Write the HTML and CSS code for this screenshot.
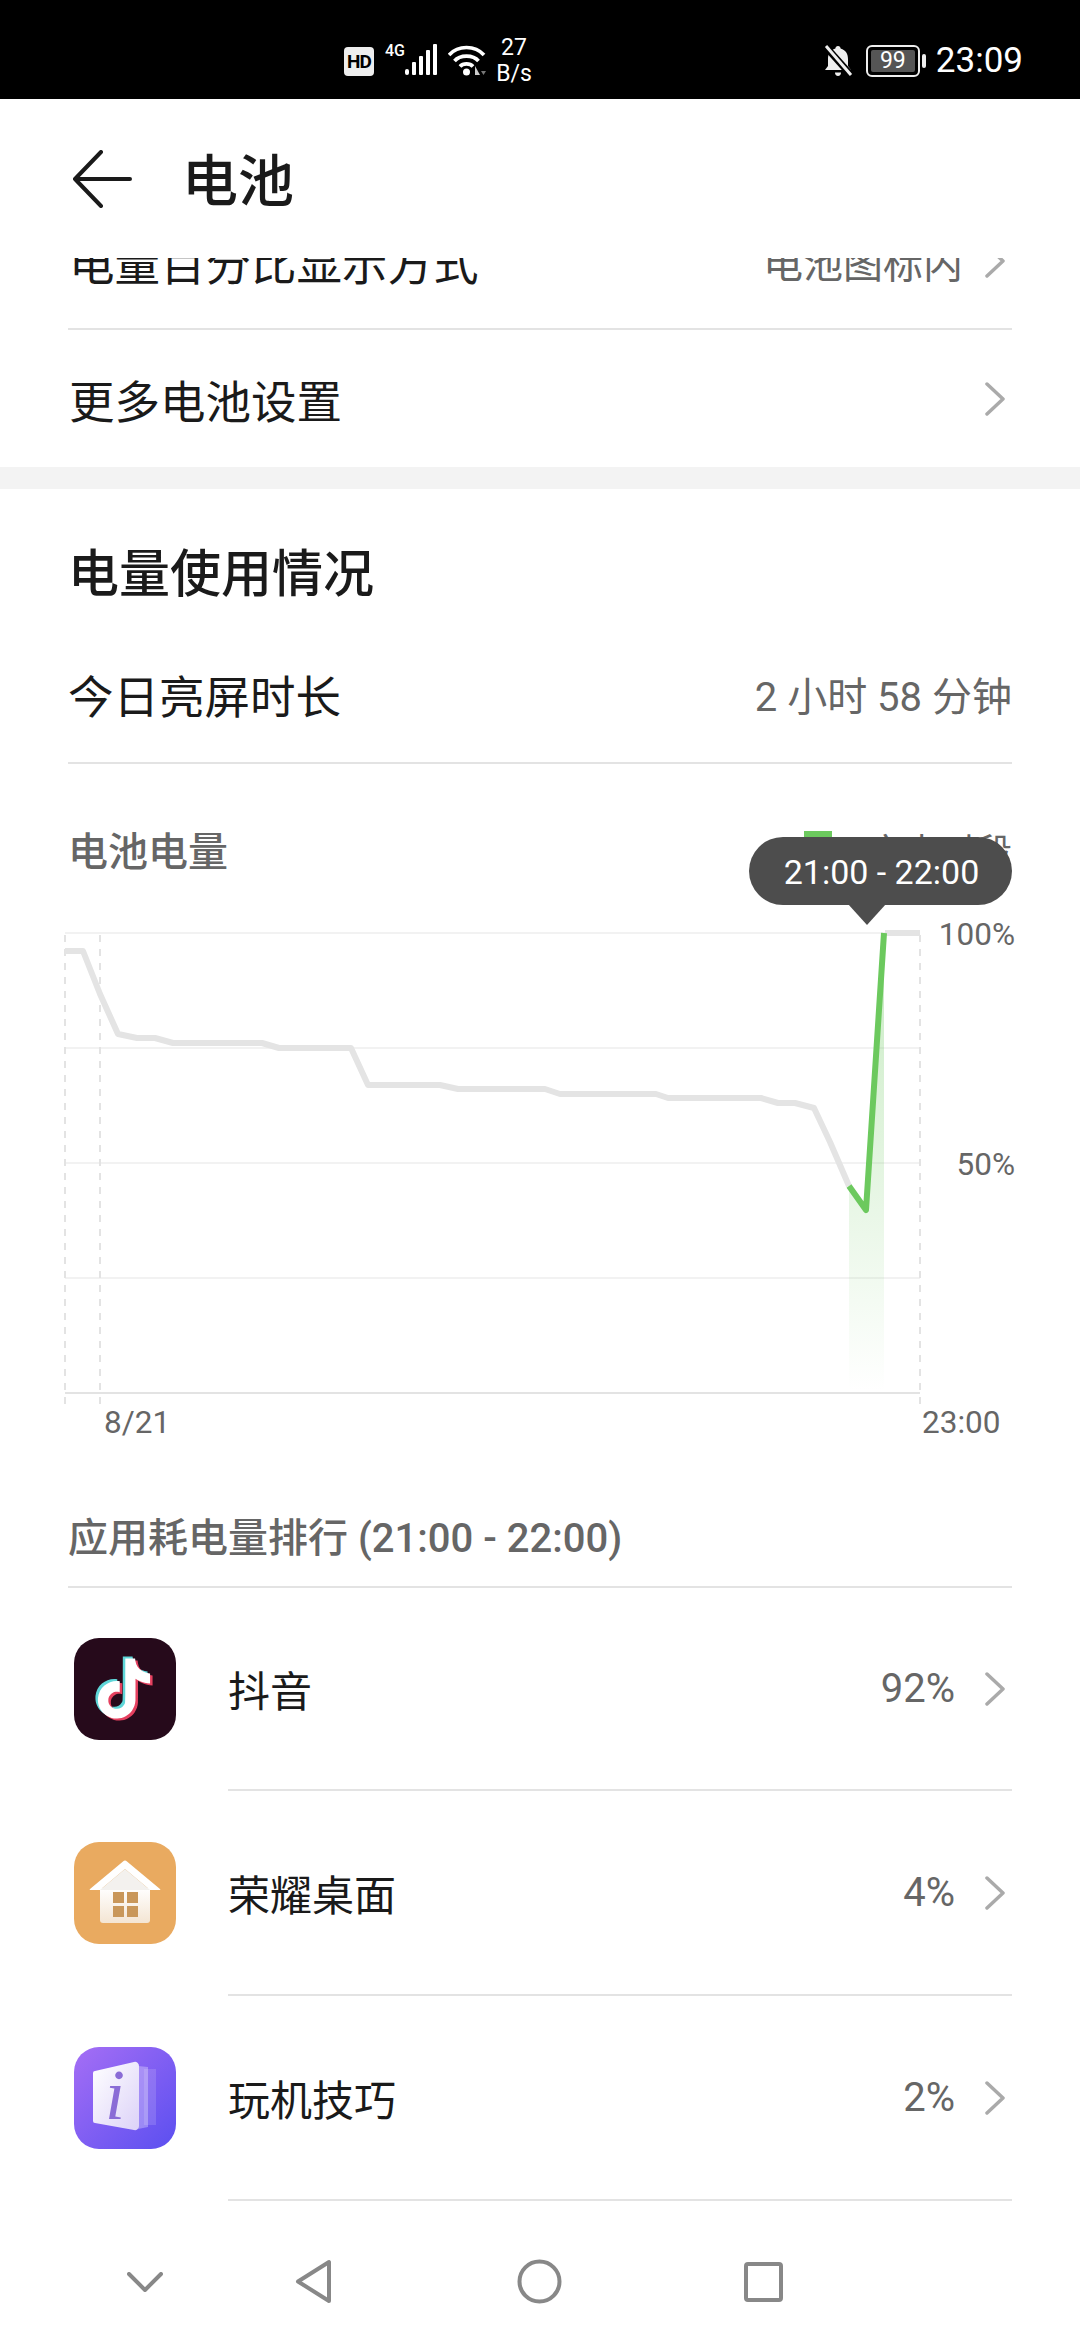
FILE: index.html
```html
<!DOCTYPE html>
<html lang="zh-CN">
<head>
    <meta charset="UTF-8">
    <title>电池</title>
    <link rel="stylesheet" href="styles.css">
</head>
<body>
    <!-- Status bar -->
    <div class="status-bar">
        <span class="hd-badge">HD</span>
        <span class="net-type">4G</span>
        <svg class="signal" viewBox="0 0 33 32">
            <rect x="0" y="25" width="4" height="6" rx="2"/>
            <rect x="7" y="18" width="4" height="13" rx="1"/>
            <rect x="14" y="12" width="4" height="19" rx="1"/>
            <rect x="21" y="6" width="4" height="25" rx="1"/>
            <rect x="28" y="0" width="4" height="31" rx="1"/>
        </svg>
        <svg class="wifi" viewBox="0 0 38 32">
            <path d="M1 11C10 1 27 1 36 11M6.500 17C12 10.500 25 10.500 30.500 17M12 22.500C15 19 22 19 25 22.500" fill="none" stroke="#fff" stroke-width="3.600"/>
            <circle cx="18.500" cy="28" r="3.500" fill="#fff"/>
            <path d="M27 31V22L32 31z" fill="#ccc"/>
            <path d="M33 27h5l-2.500 4z" fill="#777"/>
        </svg>
        <div class="speed">
            <span>27</span>
            <span>B/s</span>
        </div>
        <div class="status-right">
            <svg class="bell" viewBox="0 0 32 32">
                <path d="M16 1c1.600 0 2.500 1 2.600 2.400C24 5 26 9 26 14v7l3 4H3l3-4v-7C6 9 8 5 13.400 3.400 13.500 2 14.400 1 16 1z" fill="#eee"/>
                <path d="M13 27.500h6c0 2-1.200 3.500-3 3.500s-3-1.500-3-3.500z" fill="#eee"/>
                <path d="M3 1l26 29" stroke="#000" stroke-width="7"/>
                <path d="M4 1l25 29" stroke="#eee" stroke-width="3"/>
            </svg>
            <div class="battery"><span class="battery-level">99</span></div>
            <span class="battery-nub"></span>
            <span class="clock">23:09</span>
        </div>
    </div>

    <!-- Title bar -->
    <header class="title-bar">
        <svg class="back-arrow" viewBox="0 0 60 58">
            <path d="M29 2L3 29L29 56M3 29H58" fill="none" stroke="#1a1a1a" stroke-width="4" stroke-linecap="round" stroke-linejoin="round"/>
        </svg>
        <h1>电池</h1>
    </header>

    <main class="scroll-area">
        <div class="settings">
            <div class="setting-row">
                <span>电量百分比显示方式</span>
                <span class="setting-value">电池图标内</span>
                <svg class="chevron" viewBox="0 0 20 34"><path d="M2 2L18 17L2 32"/></svg>
            </div>
            <div class="setting-row">
                <span>更多电池设置</span>
                <svg class="chevron" viewBox="0 0 20 34"><path d="M2 2L18 17L2 32"/></svg>
            </div>
        </div>

        <section class="usage">
            <h2>电量使用情况</h2>
            <div class="screen-time">
                <span>今日亮屏时长</span>
                <span class="setting-value">2 小时 58 分钟</span>
            </div>

            <div class="chart-block">
                <div class="chart-head">
                    <span>电池电量</span>
                    <div class="legend">
                        <span class="legend-swatch"></span>
                        <span>充电时段</span>
                    </div>
                </div>
                <div class="tooltip">21:00 - 22:00</div>

                <svg class="chart" viewBox="0 920 1080 530">
                    <defs>
                        <linearGradient id="chargeFill" gradientUnits="userSpaceOnUse" x1="0" y1="934" x2="0" y2="1392">
                            <stop offset="0" stop-color="#6cc95e" stop-opacity="0.38"/>
                            <stop offset="1" stop-color="#6cc95e" stop-opacity="0"/>
                        </linearGradient>
                    </defs>
                    <path class="grid" d="M65 934H920M65 1049H920M65 1164H920M65 1279H920"/>
                    <path class="axis" d="M65 1394H920"/>
                    <path class="dash" d="M65 936V1405M100 936V1405M920 936V1405"/>
                    <path d="M849 1187L866 1211L884 934V1392H849z" fill="url(#chargeFill)"/>
                    <path class="line-used" d="M65 952H83L100 995L118 1035L137 1039H155L173 1044H262L279 1049H351L368 1086H440L458 1090H545L560 1095H656L668 1099H761L778 1104H795L814 1109L830 1143L849 1187"/>
                    <path class="line-used" d="M885 934H920"/>
                    <path class="line-charge" d="M849 1187L866 1211L884 934"/>
                    <text class="axis-label" x="1015" y="946" text-anchor="end">100%</text>
                    <text class="axis-label" x="1015" y="1176" text-anchor="end">50%</text>
                    <text class="axis-label" x="104" y="1434">8/21</text>
                    <text class="axis-label" x="922" y="1434">23:00</text>
                </svg>
            </div>

            <div class="rank-title">应用耗电量排行 (21:00 - 22:00)</div>

            <div class="app-row">
                <svg class="app-icon" viewBox="0 0 102 102">
                    <defs>
                        <path id="note" d="M12.525.02c1.310-.020 2.610-.010 3.910-.020.080 1.530.630 3.090 1.750 4.170 1.120 1.110 2.700 1.620 4.240 1.790v4.030c-1.440-.050-2.890-.350-4.200-.970-.570-.260-1.100-.590-1.620-.930-.010 2.920.010 5.840-.020 8.750-.080 1.400-.540 2.790-1.350 3.940-1.310 1.920-3.580 3.170-5.910 3.210-1.430.080-2.860-.310-4.080-1.030-2.020-1.190-3.440-3.370-3.650-5.710-.020-.500-.030-1-.010-1.490.180-1.900 1.120-3.720 2.580-4.960 1.660-1.440 3.980-2.130 6.150-1.720.020 1.480-.040 2.960-.040 4.440-.990-.320-2.150-.230-3.020.370-.630.410-1.110 1.040-1.360 1.750-.210.510-.150 1.070-.140 1.610.240 1.640 1.820 3.020 3.500 2.870 1.120-.010 2.190-.660 2.770-1.610.190-.330.400-.670.410-1.060.100-1.790.060-3.570.070-5.360.010-4.030-.010-8.050.020-12.070z"/>
                    </defs>
                    <rect width="102" height="102" rx="25" fill="#260a1b"/>
                    <use href="#note" transform="translate(17.500 18.500) scale(2.500)" fill="#5fd6d8"/>
                    <use href="#note" transform="translate(22.500 22.500) scale(2.500)" fill="#e5405f"/>
                    <use href="#note" transform="translate(20 20.500) scale(2.500)" fill="#fff"/>
                </svg>
                <div class="app-body">
                    <span class="app-name">抖音</span>
                    <span class="app-percent">92%</span>
                    <svg class="chevron" viewBox="0 0 20 34"><path d="M2 2L18 17L2 32"/></svg>
                </div>
            </div>

            <div class="app-row">
                <svg class="app-icon" viewBox="0 0 102 102">
                    <defs>
                        <linearGradient id="homeWall" x1="0" y1="0" x2="0" y2="1">
                            <stop offset="0" stop-color="#fff"/>
                            <stop offset="1" stop-color="#f4e5d3"/>
                        </linearGradient>
                    </defs>
                    <rect width="102" height="102" rx="25" fill="#e9aa60"/>
                    <path d="M26 46H76V78a3 3 0 0 1-3 3H29a3 3 0 0 1-3-3z" fill="url(#homeWall)"/>
                    <path d="M49 19.500a3 3 0 0 1 4 0L86 47a.500.500 0 0 1-.500 1H76L51 27L26 48H16.500a.500.500 0 0 1-.500-1z" fill="#fff"/>
                    <path d="M26 48L51 27L76 48z" fill="#f3f1ee"/>
                    <g fill="#c9975a">
                        <rect x="39" y="50" width="11" height="11"/>
                        <rect x="53" y="50" width="11" height="11"/>
                        <rect x="39" y="64" width="11" height="11"/>
                        <rect x="53" y="64" width="11" height="11"/>
                    </g>
                </svg>
                <div class="app-body">
                    <span class="app-name">荣耀桌面</span>
                    <span class="app-percent">4%</span>
                    <svg class="chevron" viewBox="0 0 20 34"><path d="M2 2L18 17L2 32"/></svg>
                </div>
            </div>

            <div class="app-row">
                <svg class="app-icon" viewBox="0 0 102 102">
                    <defs>
                        <linearGradient id="tipsBg" x1="0" y1="0" x2="1" y2="1">
                            <stop offset="0" stop-color="#a56ef5"/>
                            <stop offset="1" stop-color="#5b4ff0"/>
                        </linearGradient>
                        <linearGradient id="tipsPage" x1="0" y1="0" x2="1" y2="1">
                            <stop offset="0" stop-color="#fff"/>
                            <stop offset="1" stop-color="#dcd2f8"/>
                        </linearGradient>
                    </defs>
                    <rect width="102" height="102" rx="25" fill="url(#tipsBg)"/>
                    <path d="M70 22H82V78H70z" fill="#fff" opacity="0.14"/>
                    <path d="M64 19L74 20V80L64 82z" fill="#fff" opacity="0.3"/>
                    <path d="M21 24L60 15a4 4 0 0 1 5 4V79a4 4 0 0 1-5 4L21 76a2 2 0 0 1-2-2V26a2 2 0 0 1 2-2z" fill="url(#tipsPage)"/>
                    <text class="tips-letter" x="31" y="72">i</text>
                </svg>
                <div class="app-body">
                    <span class="app-name">玩机技巧</span>
                    <span class="app-percent">2%</span>
                    <svg class="chevron" viewBox="0 0 20 34"><path d="M2 2L18 17L2 32"/></svg>
                </div>
            </div>
        </section>
    </main>

    <!-- Navigation bar -->
    <nav class="nav-bar">
        <svg class="nav-collapse" viewBox="0 0 36 20"><path d="M2 2L18 18L34 2"/></svg>
        <svg class="nav-back" viewBox="0 0 37 45"><path d="M34 3V42L3 22.500z"/></svg>
        <svg class="nav-home" viewBox="0 0 45 45"><circle cx="22.500" cy="22.500" r="20"/></svg>
        <svg class="nav-recent" viewBox="0 0 39 40"><rect x="2" y="2" width="35" height="36" rx="2"/></svg>
    </nav>
</body>
</html>
```

FILE: styles.css
```css
* {
    box-sizing: border-box;
}

body {
    margin: 0;
    width: 1080px;
    height: 2338px;
    display: flex;
    flex-direction: column;
    overflow: hidden;
    background-color: #fff;
    color: #1a1a1a;
    font-family: Roboto, "Noto Sans CJK SC", sans-serif;
}

/* Status bar */
.status-bar {
    height: 99px;
    flex-shrink: 0;
    display: flex;
    align-items: center;
    padding: 0 57px 0 344px;
    background-color: #000;
    color: #fff;
}

.hd-badge {
    width: 30px;
    height: 29px;
    margin-top: 23px;
    background-color: #eee;
    border-radius: 4px;
    color: #000;
    font-size: 19px;
    font-weight: 700;
    line-height: 29px;
    text-align: center;
    letter-spacing: -1px;
}

.net-type {
    align-self: flex-start;
    margin: 43px 0 0 11px;
    width: 18px;
    font-size: 16px;
    font-weight: 500;
    line-height: 16px;
    white-space: nowrap;
}

.signal {
    width: 33px;
    height: 32px;
    margin: 20px 0 0 2px;
    fill: #fff;
}

.wifi {
    width: 38px;
    height: 32px;
    margin: 20px 0 0 10px;
}

.speed {
    display: flex;
    flex-direction: column;
    align-items: center;
    width: 36px;
    margin: 23px 0 0 10px;
    font-size: 23px;
    line-height: 26px;
}

.status-right {
    margin-left: auto;
    margin-top: 23px;
    display: flex;
    align-items: center;
}

.bell {
    width: 32px;
    height: 32px;
}

.battery {
    width: 54px;
    height: 32px;
    margin-left: 12px;
    padding: 3px;
    border: 2px solid #eee;
    border-radius: 6px;
}

.battery-level {
    display: block;
    height: 100%;
    background-color: #555;
    border-radius: 2px;
    font-size: 23px;
    line-height: 22px;
    text-align: center;
}

.battery-nub {
    width: 4px;
    height: 14px;
    margin-left: 2px;
    background-color: #eee;
    border-radius: 2px;
}

.clock {
    margin-left: 10px;
    font-size: 35px;
    line-height: 40px;
}

/* Title bar */
.title-bar {
    height: 159px;
    flex-shrink: 0;
    display: flex;
    align-items: center;
    padding-left: 72px;
    background-color: #fff;
    position: relative;
    z-index: 1;
}

.back-arrow {
    width: 60px;
    height: 58px;
}

.title-bar h1 {
    margin: 6px 0 0 50px;
    font-size: 56px;
    font-weight: 500;
    line-height: 60px;
}

.scroll-area {
    flex: 1;
    min-height: 0;
    overflow: hidden;
}

/* Settings rows */
.settings {
    margin-top: -65px;
    border-bottom: 22px solid #f3f3f3;
}

.setting-row {
    height: 137px;
    margin: 0 68px;
    display: flex;
    align-items: center;
    font-size: 45.500px;
}

.setting-row:first-child {
    border-bottom: 2px solid #e3e3e3;
}

.setting-row .setting-value {
    margin-left: auto;
    margin-right: 22px;
}

.setting-value {
    color: #666;
    font-size: 40px;
}

.chevron {
    width: 20px;
    height: 34px;
    flex-shrink: 0;
    margin-right: 7px;
    fill: none;
    stroke: #aaa;
    stroke-width: 3.500;
    stroke-linecap: round;
    stroke-linejoin: round;
}

.setting-row > span:first-child {
    margin-left: 1px;
}

.setting-row:last-child .chevron {
    margin-left: auto;
}

/* Usage section */
.usage h2 {
    height: 141px;
    margin: 0;
    padding: 58px 68px 0;
    font-size: 51px;
    font-weight: 500;
    line-height: 56px;
}

.screen-time {
    height: 134px;
    margin: 0 68px;
    padding-bottom: 4px;
    display: flex;
    align-items: center;
    justify-content: space-between;
    border-bottom: 2px solid #e3e3e3;
    font-size: 45.500px;
}

.chart-block {
    position: relative;
    padding-top: 59px;
}

.chart-head {
    height: 52px;
    margin: 0 68px;
    display: flex;
    align-items: center;
    justify-content: space-between;
    color: #666;
    font-size: 40px;
    font-weight: 500;
}

.legend {
    display: flex;
    align-items: center;
    font-size: 36px;
    font-weight: 400;
}

.legend-swatch {
    width: 28px;
    height: 36px;
    margin-right: 36px;
    background-color: #6cc95e;
}

.tooltip {
    position: absolute;
    top: 73px;
    left: 749px;
    width: 263px;
    height: 68px;
    padding-left: 2px;
    border-radius: 34px;
    background-color: #4d4d4d;
    color: #fff;
    font-size: 34px;
    line-height: 70px;
    text-align: center;
}

.tooltip::after {
    content: "";
    position: absolute;
    top: 67px;
    left: 99px;
    border-style: solid;
    border-width: 21px 19px 0;
    border-color: #4d4d4d transparent transparent;
}

.chart {
    display: block;
    width: 1080px;
    height: 530px;
    margin-top: 44px;
}

.grid {
    fill: none;
    stroke: #f2f2f2;
    stroke-width: 2;
}

.axis {
    fill: none;
    stroke: #e3e3e3;
    stroke-width: 2;
}

.dash {
    fill: none;
    stroke: #e3e3e3;
    stroke-width: 2;
    stroke-dasharray: 7 7;
}

.line-used {
    fill: none;
    stroke: #e4e4e4;
    stroke-width: 6;
    stroke-linejoin: round;
}

.line-charge {
    fill: none;
    stroke: #6cc95e;
    stroke-width: 6;
    stroke-linejoin: round;
}

.axis-label {
    fill: #666;
    font-size: 31.500px;
}

.rank-title {
    height: 139px;
    margin: 0 68px;
    padding: 64px 0 0;
    border-bottom: 2px solid #e3e3e3;
    color: #666;
    font-size: 40px;
    font-weight: 500;
    line-height: 52px;
}

/* App ranking */
.app-row {
    height: 205px;
    display: flex;
    align-items: center;
    padding-left: 74px;
}

.rank-title + .app-row {
    height: 203px;
}

.app-icon {
    width: 102px;
    height: 102px;
    flex-shrink: 0;
    margin-top: -2px;
}

.app-body {
    flex: 1;
    height: 100%;
    margin: 0 68px 0 52px;
    display: flex;
    align-items: center;
    border-bottom: 2px solid #e3e3e3;
}

.app-name {
    font-size: 42px;
}

.app-percent {
    margin-left: auto;
    margin-right: 30px;
    color: #666;
    font-size: 40px;
}

.tips-letter {
    fill: #8a6cd6;
    font-family: "Liberation Serif", serif;
    font-size: 72px;
    font-style: italic;
}

/* Navigation bar */
.nav-bar {
    height: 135px;
    flex-shrink: 0;
    display: flex;
    align-items: center;
    padding: 22px 0 0 127px;
    background-color: #fff;
}

.nav-bar svg {
    fill: none;
    stroke: #888;
    stroke-width: 4;
    stroke-linecap: round;
    stroke-linejoin: round;
}

.nav-collapse {
    width: 36px;
    height: 20px;
}

.nav-back {
    width: 37px;
    height: 45px;
    margin-left: 132px;
}

.nav-home {
    width: 45px;
    height: 45px;
    margin-left: 185px;
}

.nav-recent {
    width: 39px;
    height: 40px;
    margin-left: 182px;
}
```
